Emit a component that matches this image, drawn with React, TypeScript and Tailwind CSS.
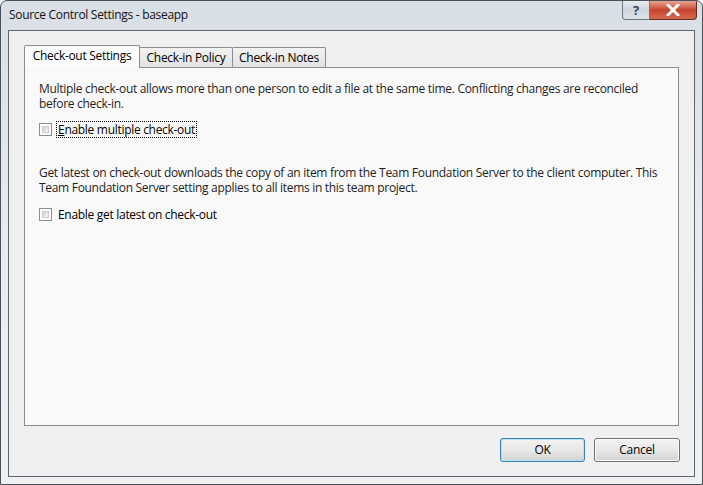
import React from "react";

function CheckBox() {
  return (
    <div className="w-[13px] h-[13px] border border-[#8e8f8f] bg-white p-[2px] shrink-0">
      <div className="w-full h-full bg-gradient-to-br from-[#d0d0d0] to-[#f6f6f6] border border-[#cbcbcb]" />
    </div>
  );
}

export default function App() {
  const font = { fontFamily: '"Open Sans", "Noto Sans", sans-serif' };
  return (
    <div
      className="w-[703px] h-[485px] relative overflow-hidden rounded-t-[7px] border border-[#4a5058] bg-gradient-to-b from-[#d9dfe6] via-[#e9ecef] to-[#eef0f2] flex flex-col text-[12px] text-black tracking-[-0.3px]"
      style={font}
    >
      {/* title bar */}
      <div className="h-[29px] flex justify-between items-start shrink-0">
        <div className="pl-[8px] pt-[6px] text-[12px] leading-[16px] text-[#111]">
          Source Control Settings - baseapp
        </div>
        <div className="flex mr-[5px]">
          <div className="w-[28px] h-[19px] border border-[#6d7784] border-t-0 rounded-bl-[4px] bg-gradient-to-b from-[#e9edf1] via-[#cdd4dc] to-[#dfe4ea] flex items-center justify-center text-[#3a4450] font-bold text-[13px] leading-none">
            ?
          </div>
          <div className="w-[47px] h-[19px] border border-[#6b2a22] border-t-0 border-l-0 rounded-br-[4px] bg-gradient-to-b from-[#e8a493] via-[#c7432c] to-[#d56a52] flex items-center justify-center">
            <svg width="14" height="12" viewBox="0 0 14 12">
              <path d="M2 1 L12 11 M12 1 L2 11" stroke="#fff" strokeWidth="3" strokeLinecap="square" />
            </svg>
          </div>
        </div>
      </div>

      {/* client area */}
      <div className="flex-1 mx-[7px] mb-[7px] border border-[#5d6670] bg-[#f0f0f0] flex flex-col px-[15px] pt-[14px] pb-[14px]">
        {/* tabs */}
        <div className="flex items-end h-[22px] shrink-0 relative z-10">
          <div className="h-[23px] -mb-px border border-[#898c95] border-b-0 bg-[#fcfcfc] rounded-t-[2px] flex items-center justify-center w-[116px] whitespace-nowrap">
            <span className="leading-none pb-[2px]">Check-out Settings</span>
          </div>
          <div className="h-[20px] w-[93px] border border-[#898c95] border-l-0 border-b-0 bg-gradient-to-b from-[#f2f2f2] to-[#e3e3e3] rounded-tr-[2px] flex items-center justify-center whitespace-nowrap">
            <span className="leading-none">Check-in Policy</span>
          </div>
          <div className="h-[20px] w-[93px] border border-[#898c95] border-l-0 border-b-0 bg-gradient-to-b from-[#f2f2f2] to-[#e3e3e3] rounded-tr-[2px] flex items-center justify-center whitespace-nowrap">
            <span className="leading-none">Check-in Notes</span>
          </div>
        </div>
        {/* panel */}
        <div className="h-[359px] border border-[#898c95] bg-[#f9f9f9] shrink-0 pl-[14px] pr-[8px] pt-[13px]">
          <p className="leading-[15px] text-[#1e1e1e]">
            Multiple check-out allows more than one person to edit a file at the same time. Conflicting changes are reconciled before check-in.
          </p>
          <div className="flex items-center mt-[10px] h-[17px]">
            <CheckBox />
            <div className="ml-[4px] border border-dotted border-black px-[1px] h-[17px] flex items-center">
              <span>
                <span className="underline">E</span>nable multiple check-out
              </span>
            </div>
          </div>
          <p className="leading-[15px] text-[#1e1e1e] mt-[27px]">
            Get latest on check-out downloads the copy of an item from the Team Foundation Server to the client computer. This Team Foundation Server setting applies to all items in this team project.
          </p>
          <div className="flex items-center mt-[11px] h-[17px]">
            <CheckBox />
            <div className="ml-[4px] border border-transparent px-[1px] h-[17px] flex items-center">
              <span>
                Enable <span className="underline">g</span>et latest on check-out
              </span>
            </div>
          </div>
        </div>
        {/* buttons */}
        <div className="flex justify-end gap-[9px] mt-auto -mr-[1px]">
          <div className="w-[85px] h-[24px] rounded-[3px] border border-[#3c7fb1] p-px bg-[#b6e3f8]">
            <div className="w-full h-full rounded-[2px] bg-gradient-to-b from-[#f2f2f2] via-[#e8e8e8] to-[#d4d4d4] flex items-center justify-center">
              OK
            </div>
          </div>
          <div className="w-[86px] h-[24px] rounded-[3px] border border-[#707070] p-px bg-[#fafafa]">
            <div className="w-full h-full rounded-[2px] bg-gradient-to-b from-[#f2f2f2] via-[#e8e8e8] to-[#d4d4d4] flex items-center justify-center">
              Cancel
            </div>
          </div>
        </div>
      </div>
    </div>
  );
}
